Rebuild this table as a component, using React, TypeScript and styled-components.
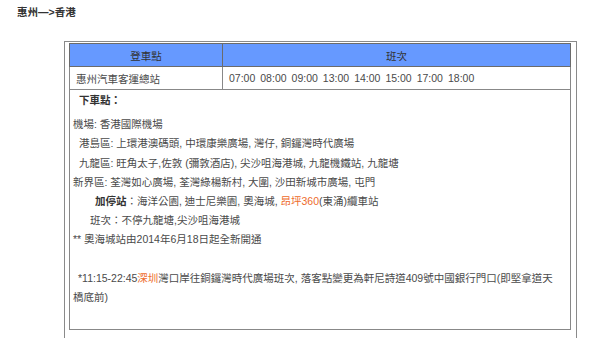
import React from 'react';
import styled, { createGlobalStyle } from 'styled-components';

const GlobalStyle = createGlobalStyle`
  html, body {
    margin: 0;
    padding: 0;
    background: #ffffff;
    overflow: hidden;
  }
  body {
    font-family: "Liberation Sans", "Noto Sans CJK TC", sans-serif;
    font-size: 10.5px;
    color: #4a4a4a;
  }
`;

const Page = styled.div`
  padding: 6px 0 0 17px;
`;

const Title = styled.h3`
  margin: 0;
  font-size: 10.5px;
  line-height: 12px;
  font-weight: bold;
  color: #333;
`;

const Frame = styled.div`
  margin: 23px 0 0 47px;
  width: 507px;
  height: 296px;
  padding-left: 4px;
  border-top: 1px solid #8a8a8a;
  border-left: 1px solid #8a8a8a;
  border-right: 1px solid #8a8a8a;
`;

const Table = styled.table`
  width: 502px;
  border-collapse: collapse;
  border: 1px solid #666;
  margin-top: 1px;
`;

const Head = styled.th<{ $w?: number }>`
  background: #6699ff;
  height: 22px;
  padding: 0;
  font-weight: normal;
  color: #333;
  text-align: center;
  border: 1px solid #6b6b6b;
  width: ${(p) => (p.$w ? `${p.$w}px` : 'auto')};
`;

const Cell = styled.td`
  height: 22px;
  padding: 0 6px;
  border: 1px solid #888;
`;

const Times = styled.div`
  display: flex;
  gap: 5px;
`;

const InfoCell = styled.td`
  padding: 1px 3px 22px;
  border: 1px solid #888;
  line-height: 19.2px;
  vertical-align: top;
`;

const Line = styled.div<{ $indent?: number }>`
  padding-left: ${(p) => p.$indent || 0}px;
  min-height: 19.2px;
  white-space: nowrap;
`;

const Heading = styled(Line)`
  font-weight: bold;
  color: #333;
  margin-bottom: 5px;
`;

const Strong = styled.b`
  color: #333;
`;

const Orange = styled.span`
  color: #ee6b2b;
`;

const times = ['07:00', '08:00', '09:00', '13:00', '14:00', '15:00', '17:00', '18:00'];

export default function App() {
  return (
    <Page>
      <GlobalStyle />
      <Title>惠州—&gt;香港</Title>
      <Frame>
        <Table>
          <thead>
            <tr>
              <Head $w={152}>登車點</Head>
              <Head>班次</Head>
            </tr>
          </thead>
          <tbody>
            <tr>
              <Cell>惠州汽車客運總站</Cell>
              <Cell>
                <Times>
                  {times.map((t) => (
                    <span key={t}>{t}</span>
                  ))}
                </Times>
              </Cell>
            </tr>
            <tr>
              <InfoCell colSpan={2}>
                <Heading $indent={6}>下車點：</Heading>
                <Line>機場: 香港國際機場</Line>
                <Line $indent={6}>港島區: 上環港澳碼頭, 中環康樂廣場, 灣仔, 銅鑼灣時代廣場</Line>
                <Line $indent={6}>九龍區: 旺角太子,佐敦 (彌敦酒店), 尖沙咀海港城, 九龍機鐵站, 九龍塘</Line>
                <Line>新界區: 荃灣如心廣場, 荃灣綠楊新村, 大圍, 沙田新城市廣場, 屯門</Line>
                <Line $indent={22}>
                  <Strong>加停站</Strong>：海洋公園, 迪士尼樂園, 奧海城, <Orange>昂坪360</Orange>(東涌)纜車站
                </Line>
                <Line $indent={17}>班次：不停九龍塘,尖沙咀海港城</Line>
                <Line>** 奧海城站由2014年6月18日起全新開通</Line>
                <Line />
                <Line $indent={5}>
                  *11:15-22:45<Orange>深圳</Orange>灣口岸往銅鑼灣時代廣場班次, 落客點變更為軒尼詩道409號中國銀行門口(即堅拿道天
                </Line>
                <Line>橋底前)</Line>
              </InfoCell>
            </tr>
          </tbody>
        </Table>
      </Frame>
    </Page>
  );
}
